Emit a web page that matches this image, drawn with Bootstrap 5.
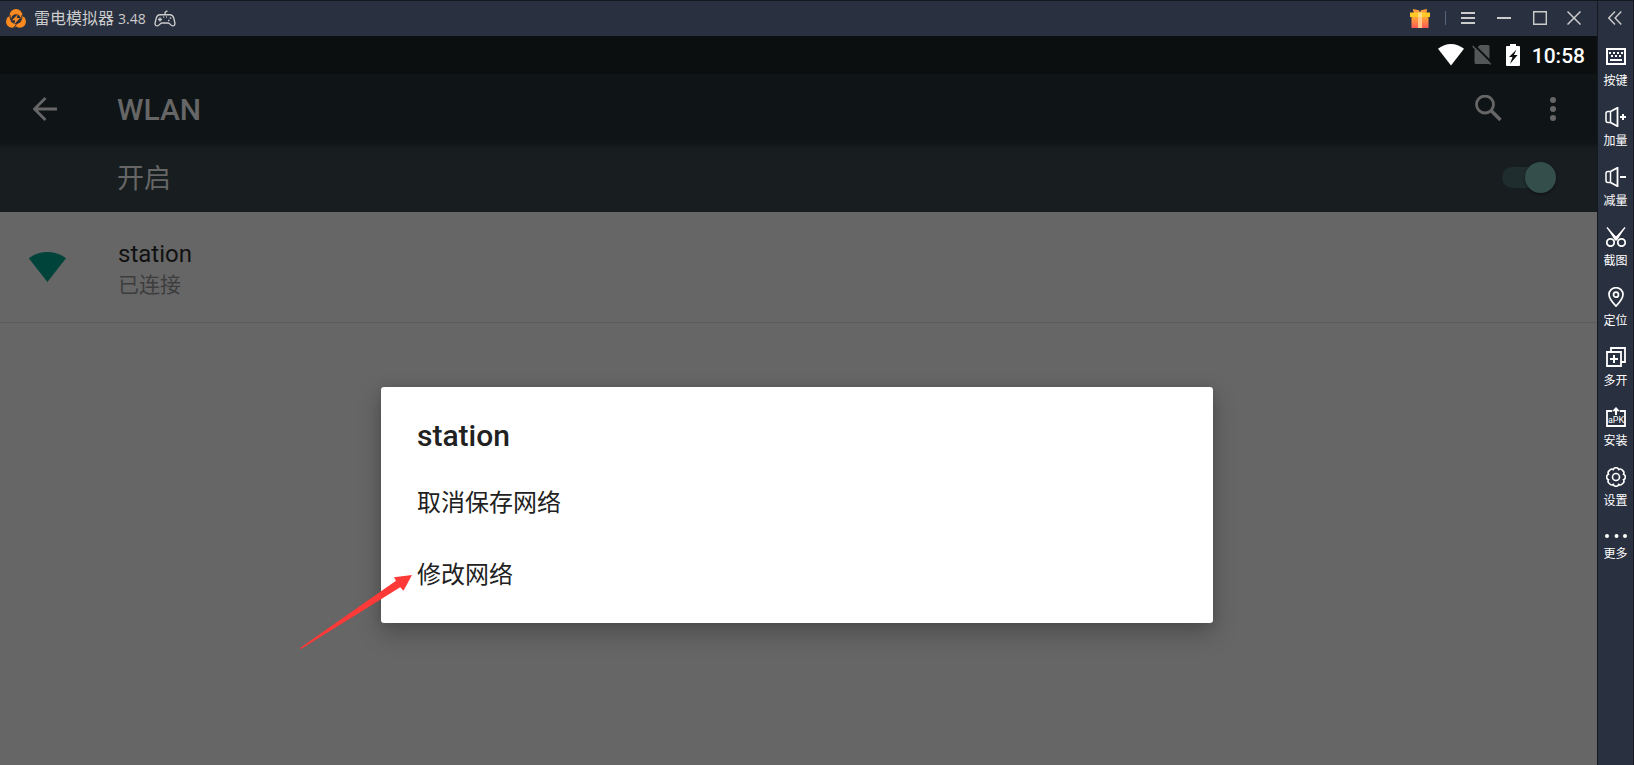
<!DOCTYPE html>
<html lang="zh-CN">
<head>
<meta charset="utf-8">
<meta name="viewport" content="width=device-width, initial-scale=1">
<title>雷电模拟器</title>
<link href="https://cdn.jsdelivr.net/npm/bootstrap@5.3.0/dist/css/bootstrap.min.css" rel="stylesheet">
<style>
body { font-family: Roboto, "Noto Sans CJK SC", sans-serif; background: #666; }
svg { display: block; flex: none; }
.bar-btn { background: none; border: 0; padding: 0; color: inherit; display: flex; align-items: center; justify-content: center; }

/* emulator window frame */
.titlebar { height: 36px; background: #29303f; border-top: 1px solid #14181f; color: #ccc; padding: 0 7px 1px 6px; }
.app-name { font: 16px/20px "Noto Sans CJK SC", sans-serif; margin: 0 8px 0 8px; }
.app-version { font: 14px/20px "Open Sans", sans-serif; margin-left: 4px; }
.titlebar .bar-btn { width: 36px; height: 34px; }
.titlebar .btn-close-window { width: 32px; }
.sep { width: 1px; height: 14px; background: #55657c; margin: 0 4px 0 7px; }
.sidebar { width: 37px; background: #29303f; border: 1px solid #14181f; border-bottom: 0; color: #fff; }
.sidebar .collapse-btn { height: 34px; color: #ccc; }
.tool-list { padding-top: 12px; gap: 19px; }
.tool-list .bar-btn { flex-direction: column; gap: 5px; font: 12px/16px "Noto Sans CJK SC", sans-serif; white-space: nowrap; }

/* android screen */
.statusbar { height: 38px; background: #0b0f10; color: #fff; padding: 0 12px 0 0; }
.status-icons { gap: 8px; margin-right: 12px; }
.status-icons svg:last-child { margin-left: 6px; }
.clock { font-size: 21px; line-height: 24px; font-weight: 500; padding-top: 2px; }
.appbar { height: 69px; background: #0f1416; color: #666; padding: 0 21px 0 33px; }
.appbar h1 { font-size: 30px; line-height: 36px; font-weight: 500; margin: 0 0 0 60px; padding-top: 2px; }
.switchbar { height: 69px; background: linear-gradient(#101517, #181d20 6px); color: #666; padding: 0 41px 0 117px; }
.switchbar label { font-size: 27px; line-height: 36px; padding-top: 2px; }
.wifi-switch { appearance: none; position: relative; width: 54px; height: 31px; margin: 0; }
.wifi-switch::before { content: ""; position: absolute; inset: 5px 0; border-radius: 11px; background: #202d2e; }
.wifi-switch::after { content: ""; position: absolute; right: 0; top: 0; width: 31px; height: 31px; border-radius: 50%; background: #344f4b; box-shadow: 0 1px 3px rgba(0,0,0,.5); }
.network { height: 111px; border-bottom: 1px solid #5b5b5b; padding: 0 28px; color: #111; text-align: left; width: 100%; justify-content: flex-start; }
.network .ssid { font-size: 24px; line-height: 32px; }
.network .state { font-size: 21px; line-height: 30px; color: #3d3d3d; }
.network .labels { margin-left: 52px; padding-top: 4px; }

/* dialog */
.dialog-layer { position: absolute; inset: 351px 3px auto 0; }
.net-dialog { position: relative; width: 832px; max-width: 90%; background: #fff; border-radius: 3px; color: #212121; padding: 29px 0 12px; box-shadow: 0 10px 24px rgba(0,0,0,.26), 0 0 8px rgba(0,0,0,.1); }
.net-dialog h2 { font-size: 30px; line-height: 40px; font-weight: 500; margin: 0 0 11px; padding: 0 36px; }
.net-dialog button { height: 72px; width: 100%; text-align: left; padding: 0 36px; background: none; border: 0; color: inherit; font-size: 24px; line-height: 36px; }
.pointer { position: absolute; left: -81px; top: 188px; }
</style>
</head>
<body>
<div class="d-flex min-vh-100">
  <div class="d-flex flex-column flex-grow-1">
    <header class="titlebar d-flex align-items-center">
      <svg width="20" height="19" viewBox="0 0 20 19">
        <circle cx="10" cy="6.5" r="6.5" fill="#ff8a1f"/><circle cx="6.2" cy="12.6" r="6.2" fill="#ff8a1f"/><circle cx="13.8" cy="12.6" r="6.2" fill="#ff8a1f"/>
        <circle cx="10" cy="10.2" r="4.900" fill="#29303f"/>
        <path d="M4 6Q3.600 10.500 6.200 13.500M16 6Q16.400 10.500 13.800 13.500M7.500 18.500Q10 17.400 10.300 15" stroke="#29303f" stroke-width="1" fill="none"/>
        <path d="M11.800 5.200 6 11.200h3.200L8.200 15.200l5.800-6.100h-3.300z" fill="#ff8a1f"/>
      </svg>
      <span class="app-name">雷电模拟器<span class="app-version">3.48</span></span>
      <svg width="22" height="17" viewBox="0 0 22 17" fill="none" stroke="#ccc" stroke-width="1.4">
        <path d="M11 5V3.200Q11 2 12 1.600L13.400.8M6 4.700h10c2 0 3.200 1.400 3.800 3.600l1 4c.5 2.400-.4 3.600-2 3.600-2.400 0-2.600-2.900-4.800-2.900H8c-2.200 0-2.400 2.900-4.800 2.900-1.600 0-2.500-1.200-2-3.600l1-4C2.800 6.100 4 4.700 6 4.700z"/>
        <path d="M4 9.500h4M6 7.500v4"/><path d="M15.800 8h1.400M14 10.500h1.400M9.300 7h.9M12 7h.9" stroke-width="1.600"/>
      </svg>
      <div class="ms-auto d-flex align-items-center">
        <button class="bar-btn" type="button" aria-label="礼包">
          <svg width="20" height="19" viewBox="0 0 20 19">
            <defs><linearGradient id="gift" x1="0" y1="0" x2="0" y2="1"><stop stop-color="#ffad32"/><stop offset="1" stop-color="#ff5a57"/></linearGradient></defs>
            <path d="M1.500 7h17v12h-17z" fill="url(#gift)"/><path d="M2.800 0 9 1.200 10 4H3.800zM17 0l-6.200 1.200L10 4h6.500z" fill="#ff9d3c"/>
            <path d="M0 3.500h20V8H0z" fill="#ffc928"/><path d="M8.200 3.500h3.800V19H8.200z" fill="#ffe08a"/><path d="M8.200 8h3.800v11H8.200z" fill="#ffb08a" opacity=".5"/>
          </svg>
        </button>
        <span class="sep"></span>
        <button class="bar-btn" type="button" aria-label="菜单"><svg width="14" height="12" viewBox="0 0 14 12"><path d="M0 1h14M0 6h14M0 11h14" stroke="currentColor" stroke-width="2"/></svg></button>
        <button class="bar-btn" type="button" aria-label="最小化"><svg width="14" height="2" viewBox="0 0 14 2"><path d="M0 1h14" stroke="currentColor" stroke-width="2"/></svg></button>
        <button class="bar-btn" type="button" aria-label="最大化"><svg width="14" height="14" viewBox="0 0 14 14"><path d="M.7.7h12.600v12.600H.7z" fill="none" stroke="currentColor" stroke-width="1.400"/></svg></button>
        <button class="bar-btn btn-close-window" type="button" aria-label="关闭"><svg width="14" height="14" viewBox="0 0 14 14"><path d="m.5.5 13 13m0-13-13 13" stroke="currentColor" stroke-width="1.500"/></svg></button>
      </div>
    </header>

    <main class="position-relative flex-grow-1">
      <div class="statusbar d-flex align-items-center justify-content-end">
        <div class="status-icons d-flex align-items-center">
          <svg width="26" height="22" viewBox="0 0 26 22"><path d="M0 4.800Q6 0 13 0t13 4.800L13 21.500z" fill="#fff"/></svg>
          <svg width="20" height="22" viewBox="0 0 20 22"><path d="M8 1h8q1.500 0 1.500 1.500v16q0 1.500-1.500 1.500H4q-1.500 0-1.500-1.500V6z" fill="#545758"/><path d="m1.400.4 19 19" stroke="#0b0f10" stroke-width="2"/><path d="m.6 2 18 18.400" stroke="#545758" stroke-width="1.600"/></svg>
          <svg width="14" height="22" viewBox="0 0 14 22"><path d="M4 0h6v2h3q1 0 1 1v18q0 1-1 1H1q-1 0-1-1V3q0-1 1-1h3z" fill="#fff"/><path d="m10.500 5.500-7.500 7.500h3.500l-2.500 7L11.600 11H8z" fill="#0b0f10"/></svg>
        </div>
        <time class="clock">10:58</time>
      </div>
      <div class="appbar d-flex align-items-center">
        <button class="bar-btn" type="button" aria-label="返回"><svg width="24" height="24" viewBox="0 0 24 24"><path d="M24 12H2M12.500 1 1.500 12l11 11" fill="none" stroke="currentColor" stroke-width="2.800"/></svg></button>
        <h1>WLAN</h1>
        <button class="bar-btn ms-auto" type="button" aria-label="搜索"><svg width="27" height="27" viewBox="0 0 27 27" fill="none" stroke="currentColor"><circle cx="10" cy="9.500" r="8.500" stroke-width="2.800"/><path d="m15.500 15 10 10" stroke-width="3.600"/></svg></button>
        <button class="bar-btn ms-5" type="button" aria-label="更多选项"><svg width="26" height="24" viewBox="0 0 26 24" fill="currentColor"><circle cx="3" cy="3" r="3"/><circle cx="3" cy="12" r="3"/><circle cx="3" cy="21" r="3"/></svg></button>
      </div>
      <div class="switchbar d-flex align-items-center justify-content-between">
        <label for="wlan">开启</label>
        <input class="wifi-switch" type="checkbox" role="switch" id="wlan" checked>
      </div>
      <button class="bar-btn network" type="button">
        <svg width="38" height="31" viewBox="0 0 38 31"><path d="M.8 6.300Q9 0 19.400 0T38 6.300L19.400 30z" fill="#00433a"/></svg>
        <span class="labels d-flex flex-column"><span class="ssid">station</span><span class="state">已连接</span></span>
      </button>

      <div class="dialog-layer d-flex justify-content-center">
        <section class="net-dialog" role="dialog" aria-labelledby="dlg-title">
          <h2 id="dlg-title">station</h2>
          <button type="button">取消保存网络</button>
          <button type="button">修改网络</button>
          <svg class="pointer" width="113" height="75" viewBox="0 0 113 75"><path d="M0 73 96 5.700 94 2.300 112 0 103.500 15.700 100.200 12.300 1 74z" fill="#fd3a38"/></svg>
        </section>
      </div>
    </main>
  </div>

  <nav class="sidebar flex-shrink-0" aria-label="工具栏">
    <button class="bar-btn collapse-btn w-100" type="button" aria-label="收起"><svg width="16" height="14" viewBox="0 0 16 14"><path d="M7 .5.800 7 7 13.500M13.300.5 7.100 7l6.200 6.500" fill="none" stroke="currentColor" stroke-width="1.400"/></svg></button>
    <div class="tool-list d-flex flex-column">
      <button class="bar-btn" type="button"><svg width="20" height="20" viewBox="0 0 20 20"><path d="M1 2h18v15H1z" fill="none" stroke="#fff" stroke-width="2"/><path d="M3 6h2m2 0h2m2 0h2m2 0h2M5 9h2m2 0h2m2 0h2M4 13h12" stroke="#fff" stroke-width="2"/></svg>按键</button>
      <button class="bar-btn" type="button"><svg width="22" height="20" viewBox="0 0 22 20" fill="none" stroke="#fff"><path d="M5.500 4.500H3Q1 4.500 1 6.500v7q0 2 2 2h2.500M5.500 4.500v11" stroke-width="1.500"/><path d="m5.500 4.500 7-3.700v18.400l-7-3.700" stroke-width="1.800"/><path d="M15 10h6M18 7v6" stroke-width="2"/></svg>加量</button>
      <button class="bar-btn" type="button"><svg width="22" height="20" viewBox="0 0 22 20" fill="none" stroke="#fff"><path d="M5.500 4.500H3Q1 4.500 1 6.500v7q0 2 2 2h2.500M5.500 4.500v11" stroke-width="1.500"/><path d="m5.500 4.500 7-3.700v18.400l-7-3.700" stroke-width="1.800"/><path d="M15 10h6" stroke-width="2"/></svg>减量</button>
      <button class="bar-btn" type="button"><svg width="20" height="20" viewBox="0 0 20 20"><path d="M.5 0 9 13.500h2L19.500 0 10 9.500z" fill="#fff"/><path d="m1 .5 9 10.500L19 .5" fill="none" stroke="#fff" stroke-width="1.200"/><circle cx="4.500" cy="15.500" r="3.700" fill="none" stroke="#fff" stroke-width="1.800"/><circle cx="15.500" cy="15.500" r="3.700" fill="none" stroke="#fff" stroke-width="1.800"/></svg>截图</button>
      <button class="bar-btn" type="button"><svg width="20" height="20" viewBox="0 0 20 20" fill="none" stroke="#fff" stroke-width="1.700"><path d="M10 19.200Q3 12 3 7.600a7 6.900 0 0 1 14 0Q17 12 10 19.200z"/><circle cx="10" cy="7.700" r="2.500"/></svg>定位</button>
      <button class="bar-btn" type="button"><svg width="20" height="20" viewBox="0 0 20 20" fill="none" stroke="#fff" stroke-width="1.800"><path d="M1 5h14v14H1zM5 5V1h14v14h-4"/><path d="M4 12h8M8 8v8" stroke-width="2"/></svg>多开</button>
      <button class="bar-btn" type="button"><svg width="20" height="20" viewBox="0 0 20 20"><path d="M6 4H1v15h18V4h-5" fill="none" stroke="#fff" stroke-width="1.800"/><path d="M10 8V2" stroke="#fff" stroke-width="2"/><path d="M6 4.300 10 0l4 4.300z" fill="#fff"/><text x="10" y="16" text-anchor="middle" font-family="Roboto, sans-serif" font-size="9" fill="#fff">aPK</text></svg>安装</button>
      <button class="bar-btn" type="button"><svg width="20" height="20" viewBox="0 0 20 20" fill="none" stroke="#fff" stroke-width="1.600"><path d="M7.300 2.500a2.900 2.900 0 0 1 5.400 0 2.900 2.900 0 0 1 3.900 1 2.900 2.900 0 0 1 .9 3.800 2.900 2.900 0 0 1 0 5.400 2.900 2.900 0 0 1-1 3.900 2.900 2.900 0 0 1-3.800.9 2.900 2.900 0 0 1-5.400 0 2.900 2.900 0 0 1-3.800-.9 2.900 2.900 0 0 1-1-3.900 2.900 2.900 0 0 1 0-5.400 2.900 2.900 0 0 1 1-3.800 2.900 2.900 0 0 1 3.800-1z"/><circle cx="10" cy="10" r="3.500"/></svg>设置</button>
      <button class="bar-btn" type="button"><svg width="22" height="13" viewBox="0 0 22 13" fill="#fff"><circle cx="2" cy="9" r="2"/><circle cx="11.500" cy="9" r="2"/><circle cx="20" cy="9" r="2"/></svg>更多</button>
    </div>
  </nav>
</div>
<script src="https://cdn.jsdelivr.net/npm/bootstrap@5.3.0/dist/js/bootstrap.bundle.min.js"></script>
</body>
</html>
